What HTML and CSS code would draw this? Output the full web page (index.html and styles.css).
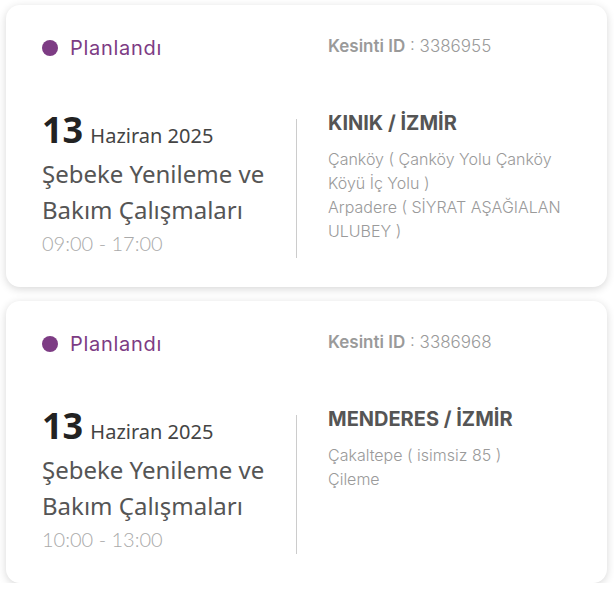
FILE: index.html
```html
<!DOCTYPE html>
<html lang="tr">
<head>
<meta charset="utf-8">
<title>Kesintiler</title>
<link rel="stylesheet" href="styles.css">
</head>
<body>
<div class="list">
  <div class="card">
    <div class="head">
      <div class="status"><span class="dot"></span>Planlandı</div>
      <div class="cid"><b>Kesinti ID</b> : 3386955</div>
    </div>
    <div class="body">
      <div class="left">
        <div class="date"><span class="day">13</span> <span class="month">Haziran 2025</span></div>
        <div class="title">Şebeke Yenileme ve Bakım Çalışmaları</div>
        <div class="time">09:00 - 17:00</div>
      </div>
      <div class="right">
        <div class="place">KINIK / İZMİR</div>
        <div class="addr">Çanköy ( Çanköy Yolu Çanköy Köyü İç Yolu )</div>
        <div class="addr">Arpadere ( SİYRAT AŞAĞIALAN ULUBEY )</div>
      </div>
    </div>
  </div>
  <div class="card">
    <div class="head">
      <div class="status"><span class="dot"></span>Planlandı</div>
      <div class="cid"><b>Kesinti ID</b> : 3386968</div>
    </div>
    <div class="body">
      <div class="left">
        <div class="date"><span class="day">13</span> <span class="month">Haziran 2025</span></div>
        <div class="title">Şebeke Yenileme ve Bakım Çalışmaları</div>
        <div class="time">10:00 - 13:00</div>
      </div>
      <div class="right">
        <div class="place">MENDERES / İZMİR</div>
        <div class="addr">Çakaltepe ( isimsiz 85 )</div>
        <div class="addr">Çileme</div>
      </div>
    </div>
  </div>
</div>
</body>
</html>
```
FILE: styles.css
```css
* { box-sizing: border-box; }
body {
  margin: 0;
  background: #ffffff;
  font-family: "Inter", "Noto Sans", sans-serif;
}
.list {
  display: flex;
  flex-direction: column;
  gap: 14px;
  padding: 5px 7px 0 6px;
}
.card {
  background: #fff;
  border-radius: 14px;
  box-shadow: 0 2px 8px rgba(0,0,0,0.16);
  height: 282px;
  padding: 30px 20px 0 36px;
}
.head {
  display: grid;
  grid-template-columns: 286px 1fr;
  height: 26px;
  align-items: center;
}
.status {
  display: flex;
  align-items: center;
  color: #7d3c84;
  font-size: 20px;
  letter-spacing: 0.7px;
}
.dot {
  width: 16px;
  height: 16px;
  border-radius: 50%;
  background: #7d3c84;
  margin-right: 12px;
}
.cid {
  color: #9a9a9a;
  font-size: 17px;
  font-weight: 300;
  margin-top: -4px;
}
.cid b { font-weight: 600; color: #9a9a9a; }
.body {
  display: grid;
  grid-template-columns: 255px 1fr;
  margin-top: 48px;
  align-items: start;
}
.left {
  margin-top: 10px;
  padding-bottom: 2px;
  border-right: 1px solid #cccccc;
  font-family: "Noto Sans", "Open Sans", sans-serif;
}
.date { line-height: 22px; margin-bottom: 8px; white-space: nowrap; }
.day { font-size: 36px; font-weight: 700; color: #222; margin-right: 3px; }
.month { font-size: 20px; color: #444; }
.title {
  font-size: 24px;
  line-height: 36px;
  color: #555;
}
.time {
  font-family: "Lato", sans-serif;
  font-size: 20px;
  font-weight: 300;
  line-height: 26px;
  margin-top: 2px;
  color: #aaa;
}
.right {
  padding-left: 31px;
  color: #9a9a9a;
}
.place {
  font-size: 20px;
  font-weight: 700;
  color: #555;
  line-height: 28px;
  margin-bottom: 10px;
}
.addr {
  font-size: 16px;
  line-height: 24px;
  font-weight: 300;
}
```
